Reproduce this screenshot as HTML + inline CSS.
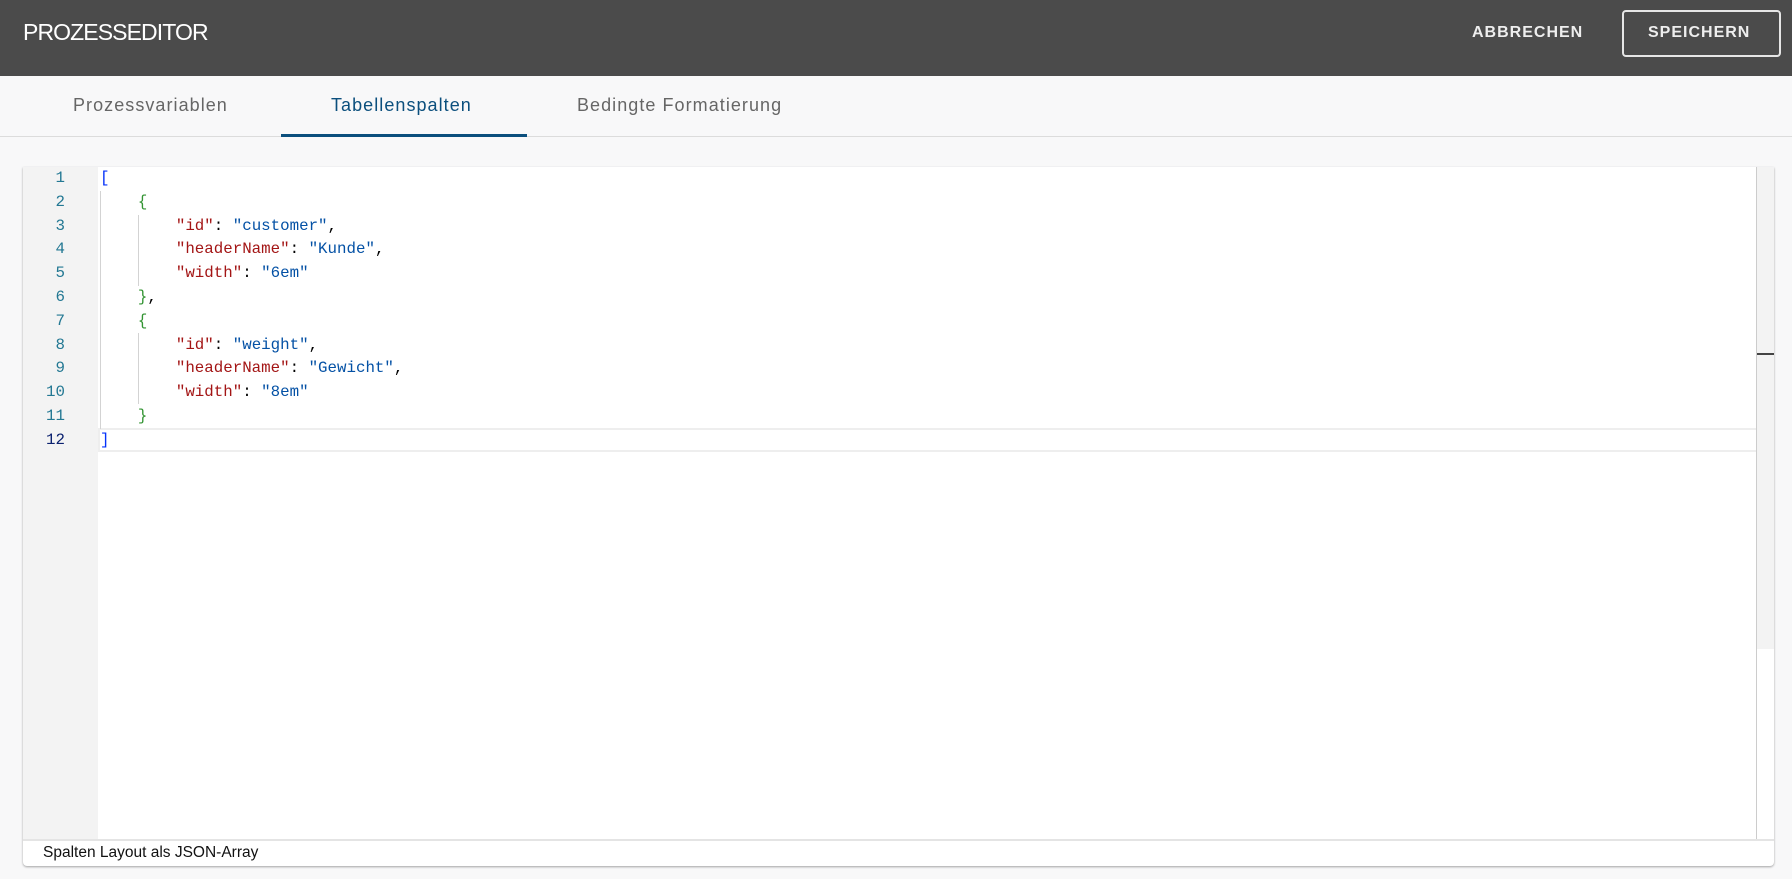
<!DOCTYPE html>
<html><head><meta charset="utf-8"><style>
*{margin:0;padding:0;box-sizing:border-box}
body{width:1792px;height:879px;background:#f8f8f9;font-family:"Liberation Sans",sans-serif;position:relative;overflow:hidden}
.hdr{position:absolute;left:0;top:0;width:1792px;height:76px;background:#4b4b4b}
.title{position:absolute;left:23px;top:19px;color:#fff;font-size:23px;letter-spacing:-0.9px}
.btn{position:absolute;color:#eee;font-weight:bold;font-size:16px;letter-spacing:1px}
.sv{position:absolute;left:1622px;top:10px;width:159px;height:47px;border:2px solid #e6e6e6;border-radius:4px}
.tabs{position:absolute;left:0;top:76px;width:1792px;height:61px;border-bottom:1px solid #dcdcdc}
.tab{position:absolute;top:19px;font-size:18px;color:#666;letter-spacing:1.05px}
.ul{position:absolute;left:281px;top:58px;width:246px;height:3px;background:#0b4f7d}
.box{position:absolute;left:23px;top:167px;width:1751px;height:699px;background:#fff;border-radius:0 0 4px 4px;box-shadow:0 1px 2px rgba(0,0,0,.35)}
.gut{position:absolute;left:0;top:0;width:75px;height:672px;background:#f3f3f3}
.ln{position:absolute;left:0;width:42px;text-align:right;font-family:"Liberation Mono",monospace;font-size:15.8px;color:#237893;line-height:23.8px}
.code{position:absolute;left:77px;top:0;font-family:"Liberation Mono",monospace;font-size:15.8px;line-height:23.8px;white-space:pre;color:#000}
.k{color:#a31515}.s{color:#0451a5}.b{color:#0431fa}.g{color:#319331}
.cur{position:absolute;left:75px;top:261px;width:1675px;height:24px;border:2px solid #eee}
.sb{position:absolute;left:1733px;top:0;width:18px;height:482px;background:#f3f3f3;border-left:1px solid #ccc}
.sbl{position:absolute;left:1733px;top:0;width:1px;height:672px;background:#ccc}
.mk{position:absolute;left:1734px;top:186px;width:17px;height:2px;background:#444}
.ig{position:absolute;width:1px;background:#d3d3d3}
.ft{position:absolute;left:0;top:672px;width:1751px;height:2px;background:#e4e4e4}
.fl{position:absolute;left:20px;top:677px;font-size:15.5px;color:#111}
</style></head><body>
<div class="hdr">
<div class="title">PROZESSEDITOR</div>
<div class="btn" style="left:1472px;top:24px">ABBRECHEN</div>
<div class="sv"></div>
<div class="btn" style="left:1648px;top:24px">SPEICHERN</div>
</div>
<div class="tabs">
<div class="tab" style="left:73px">Prozessvariablen</div>
<div class="tab" style="left:331px;color:#0b4f7d">Tabellenspalten</div>
<div class="tab" style="left:577px">Bedingte Formatierung</div>
<div class="ul"></div>
</div>
<div class="box">
<div class="gut"></div>
<div class="cur"></div>
<div class="ln" style="top:0">1<br>2<br>3<br>4<br>5<br>6<br>7<br>8<br>9<br>10<br>11<br><span style="color:#0b216f">12</span></div>
<div class="ig" style="left:77px;top:24px;height:238px"></div>
<div class="ig" style="left:115px;top:48px;height:71px"></div>
<div class="ig" style="left:115px;top:166px;height:71px"></div>
<div class="code"><span class="b">[</span>
    <span class="g">{</span>
        <span class="k">"id"</span>: <span class="s">"customer"</span>,
        <span class="k">"headerName"</span>: <span class="s">"Kunde"</span>,
        <span class="k">"width"</span>: <span class="s">"6em"</span>
    <span class="g">}</span>,
    <span class="g">{</span>
        <span class="k">"id"</span>: <span class="s">"weight"</span>,
        <span class="k">"headerName"</span>: <span class="s">"Gewicht"</span>,
        <span class="k">"width"</span>: <span class="s">"8em"</span>
    <span class="g">}</span>
<span class="b">]</span></div>
<div class="sb"></div>
<div class="sbl"></div>
<div class="mk"></div>
<div class="ft"></div>
<div class="fl">Spalten Layout als JSON-Array</div>
</div>
</body></html>
